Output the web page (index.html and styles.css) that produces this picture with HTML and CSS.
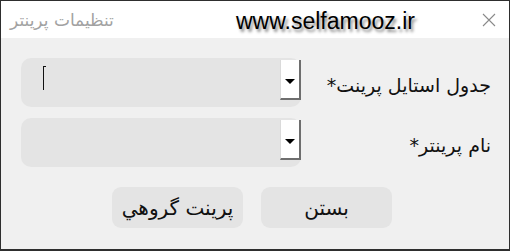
FILE: index.html
```html
<!DOCTYPE html>
<html lang="fa">

<head>
    <meta charset="utf-8">
    <meta name="viewport" content="width=device-width, initial-scale=1.0">
    <title>تنظیمات پرینتر</title>
    <link rel="stylesheet" href="styles.css">
</head>

<body>
    <div class="pencere">
        <header class="baslik">
            <span class="baslik-metin" dir="rtl">تنظیمات پرینتر</span>
            <span class="filigran">www.selfamooz.ir</span>
            <span class="kapat">
                <svg width="14" height="14" viewBox="0 0 14 14">
                    <path d="M1 1 L13 13 M13 1 L1 13" stroke="#8a8a8a" stroke-width="1.1" fill="none" />
                </svg>
            </span>
        </header>

        <section class="icerik">
            <div class="satir">
                <div class="secim">
                    <span class="imlec"></span>
                    <span class="ac"><i class="ok"></i></span>
                </div>
                <label class="etiket" dir="rtl">جدول استایل پرینت*</label>
            </div>
            <div class="satir">
                <div class="secim">
                    <span class="ac"><i class="ok"></i></span>
                </div>
                <label class="etiket" dir="rtl">نام پرینتر*</label>
            </div>
            <div class="butonlar">
                <button dir="rtl">پرینت گروهي</button>
                <button dir="rtl">بستن</button>
            </div>
        </section>
    </div>
</body>

</html>
```

FILE: styles.css
```css
body {
    margin: 0;
    font-family: "DejaVu Sans", "Noto Sans", sans-serif;
}

.pencere {
    width: 510px;
    height: 251px;
    box-sizing: border-box;
    border: 1px solid #2e2e2e;
    border-bottom-width: 2px;
    background: #f0f0f0;
    display: flex;
    flex-direction: column;
}

.baslik {
    height: 37px;
    background: #fff;
    display: flex;
    align-items: center;
    padding: 0 13px 0 9px;
}

.baslik-metin {
    font-size: 17px;
    color: #a2a2a2;
    width: 226px;
    text-align: left;
}

.filigran {
    font-family: "Liberation Sans", Arial, sans-serif;
    font-size: 23px;
    color: #000;
    text-shadow: 2px 3px 3px #8c8c8c;
    margin-top: 4px;
}

.kapat {
    margin-left: auto;
    display: flex;
}

.icerik {
    padding: 20px 0 0 20px;
}

.satir {
    display: flex;
    align-items: center;
    margin-bottom: 11px;
}

.secim {
    width: 280px;
    height: 49px;
    border-radius: 10px;
    background: #e4e4e4;
    position: relative;
    display: flex;
    align-items: flex-start;
}

.imlec {
    position: absolute;
    left: 22px;
    top: 8px;
    width: 1px;
    height: 24px;
    background: #111;
}

.imlec::after {
    content: "";
    position: absolute;
    top: 0;
    left: 1px;
    width: 2px;
    height: 1px;
    background: #111;
}

.ac {
    margin: 2px 0 0 auto;
    width: 18px;
    height: 38px;
    background: #fff;
    border-right: 2px solid #6e6e6e;
    border-bottom: 2px solid #6e6e6e;
    border-left: 1px solid #dadada;
    display: flex;
    align-items: center;
    justify-content: center;
}

.ok {
    width: 0;
    height: 0;
    border-left: 5px solid transparent;
    border-right: 5px solid transparent;
    border-top: 5px solid #000;
    margin-top: 4px;
}

.etiket {
    margin-left: auto;
    margin-right: 18px;
    font-size: 19px;
    color: #111;
    margin-top: 4px;
}

.butonlar {
    display: flex;
    gap: 18px;
    padding: 9px 0 0 91px;
}

button {
    width: 131px;
    height: 41px;
    border: none;
    border-radius: 9px;
    background: #e4e4e4;
    font-family: "DejaVu Sans", "Noto Sans", sans-serif;
    font-size: 20px;
    color: #111;
    cursor: pointer;
}
```
